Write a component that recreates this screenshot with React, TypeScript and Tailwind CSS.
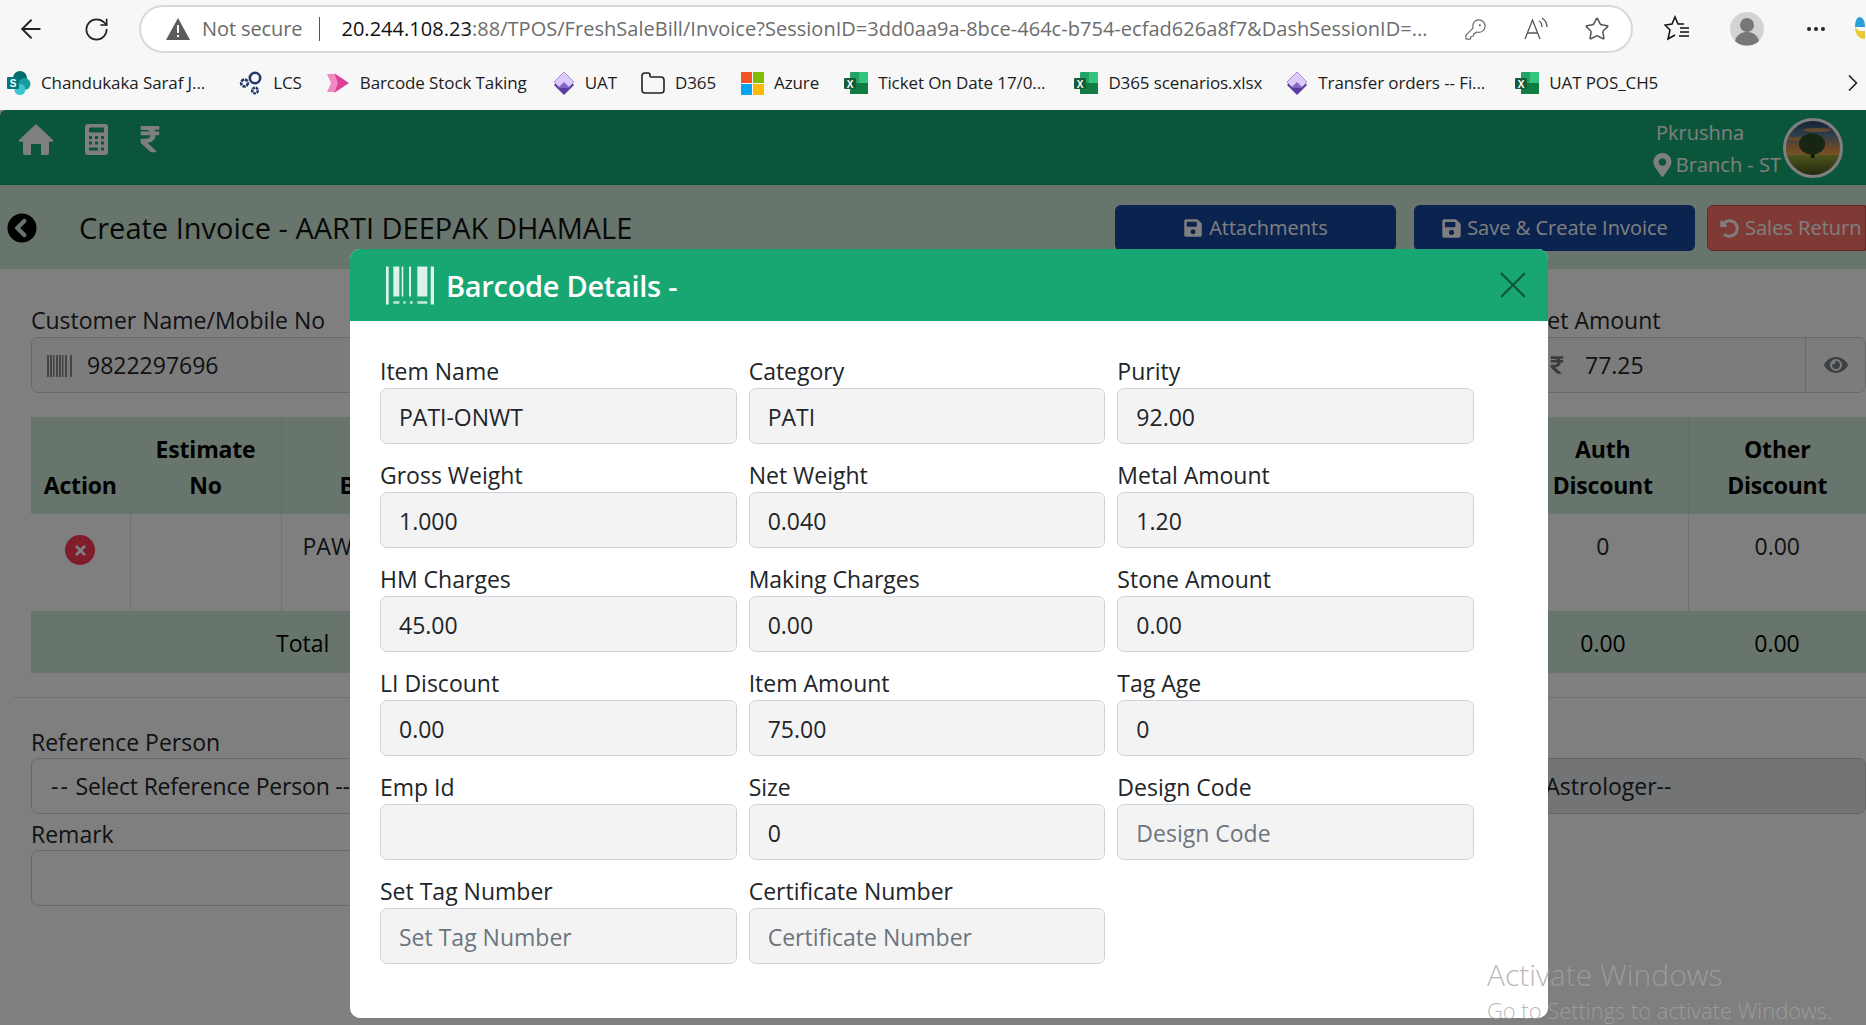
import { ArrowLeft, RotateCw, Star, KeyRound, MoreHorizontal, ChevronRight } from "lucide-react";
import { FaRupeeSign, FaSave, FaUndoAlt, FaEye, FaMapMarkerAlt, FaChevronCircleLeft, FaTimes } from "react-icons/fa";

const fields = [
  { label: "Item Name", value: "PATI-ONWT" },
  { label: "Category", value: "PATI" },
  { label: "Purity", value: "92.00" },
  { label: "Gross Weight", value: "1.000" },
  { label: "Net Weight", value: "0.040" },
  { label: "Metal Amount", value: "1.20" },
  { label: "HM Charges", value: "45.00" },
  { label: "Making Charges", value: "0.00" },
  { label: "Stone Amount", value: "0.00" },
  { label: "LI Discount", value: "0.00" },
  { label: "Item Amount", value: "75.00" },
  { label: "Tag Age", value: "0" },
  { label: "Emp Id", value: "" },
  { label: "Size", value: "0" },
  { label: "Design Code", placeholder: "Design Code" },
  { label: "Set Tag Number", placeholder: "Set Tag Number" },
  { label: "Certificate Number", placeholder: "Certificate Number" },
];

function SharePointIcon() {
  return (
    <svg width="24" height="24" viewBox="0 0 24 24">
      <circle cx="13" cy="7" r="7" fill="#036c70" />
      <circle cx="17.5" cy="13" r="6" fill="#1a9ba1" />
      <circle cx="13" cy="18.5" r="5.5" fill="#37c6d0" />
      <rect x="0" y="6" width="12" height="12" rx="1" fill="#03787c" />
      <text x="6" y="16" textAnchor="middle" fontSize="10" fontWeight="700" fill="#fff" fontFamily="Liberation Sans">S</text>
    </svg>
  );
}

function GearsIcon() {
  return (
    <svg width="24" height="24" viewBox="0 0 24 24" fill="none" stroke="#26386a" strokeWidth="2.6">
      <circle cx="16" cy="7" r="5.2" />
      <circle cx="5.5" cy="12" r="3.4" strokeDasharray="3.2 .8" />
      <circle cx="16" cy="19.5" r="2.8" strokeDasharray="2.6 .8" />
    </svg>
  );
}

function ArrowIcon() {
  return (
    <svg width="24" height="22" viewBox="0 0 24 22">
      <path d="M1 2h7l5 9-5 9H1l4-9z" fill="#f08ac0" />
      <path d="M8 1l15 10L8 21l4-10z" fill="#dd3f97" />
    </svg>
  );
}

function DiamondIcon() {
  return (
    <svg width="22" height="24" viewBox="0 0 22 24">
      <path d="M1 14l5-5h10l5 5-10 10z" fill="#5a3a9e" />
      <path d="M11 1l10 10-5 5H6l-5-5z" fill="#dccbfa" stroke="#a98ae0" strokeWidth="1" />
      <path d="M6 16l5-5 5 5z" fill="#8565c6" />
    </svg>
  );
}

function FolderIcon() {
  return (
    <svg width="24" height="22" viewBox="0 0 24 22" fill="none" stroke="#222" strokeWidth="1.6">
      <path d="M1 18V4a3 3 0 0 1 3-3h3a2 2 0 0 1 2 2v1a1 1 0 0 0 1 1h10a3 3 0 0 1 3 3v10a3 3 0 0 1-3 3H4a3 3 0 0 1-3-3z" />
    </svg>
  );
}

function MicrosoftIcon() {
  return (
    <svg width="23" height="23" viewBox="0 0 23 23">
      <rect width="11" height="11" fill="#f35325" />
      <rect x="12" width="11" height="11" fill="#81bc06" />
      <rect y="12" width="11" height="11" fill="#05a6f0" />
      <rect x="12" y="12" width="11" height="11" fill="#ffba08" />
    </svg>
  );
}

function ExcelIcon() {
  return (
    <svg width="24" height="22" viewBox="0 0 24 22">
      <rect x="6" y="0" width="18" height="22" rx="1" fill="#21a366" />
      <rect x="15" y="0" width="9" height="11" fill="#33c481" />
      <rect x="6" y="11" width="18" height="11" fill="#107c41" />
      <rect x="0" y="6" width="12" height="11" rx="1" fill="#185c37" />
      <text x="6" y="15.5" textAnchor="middle" fontSize="10" fontWeight="700" fill="#fff" fontFamily="Liberation Sans">X</text>
    </svg>
  );
}

function Bookmark({ icon, text, className = "" }: { icon: React.ReactNode; text: string; className?: string }) {
  return (
    <div className={`flex items-center gap-[10px] shrink-0 ${className}`}>
      {icon}
      <span className="text-[17px] tracking-[-0.1px] text-[#1c1c1c] whitespace-nowrap">{text}</span>
    </div>
  );
}

function BarsIcon({ className }: { className: string }) {
  return (
    <svg viewBox="0 0 25 22" className={className} fill="currentColor">
      <rect x="0" width="2" height="22" />
      <rect x="3" width="2" height="22" />
      <rect x="6" width="1.5" height="22" />
      <rect x="9" width="2" height="22" />
      <rect x="12" width="2" height="22" />
      <rect x="15" width="1.5" height="22" />
      <rect x="18" width="2" height="22" />
      <rect x="23" width="2" height="22" />
    </svg>
  );
}

function Avatar() {
  return (
    <svg width="60" height="60" viewBox="0 0 60 60" className="absolute right-[23px] top-[8px]">
      <defs>
        <clipPath id="avatar"><circle cx="30" cy="30" r="28" /></clipPath>
        <linearGradient id="sky" x1="0" y1="0" x2="0" y2="1">
          <stop offset="0" stopColor="#17385c" />
          <stop offset="0.45" stopColor="#5f7f9c" />
          <stop offset="0.8" stopColor="#d89048" />
          <stop offset="1" stopColor="#f0a850" />
        </linearGradient>
        <linearGradient id="field" x1="0" y1="0" x2="0" y2="1">
          <stop offset="0" stopColor="#9aa83a" />
          <stop offset="1" stopColor="#3c4a1a" />
        </linearGradient>
      </defs>
      <g clipPath="url(#avatar)">
        <rect width="60" height="38" fill="url(#sky)" />
        <ellipse cx="34" cy="12" rx="14" ry="2" fill="#c9925c" />
        <ellipse cx="14" cy="21" rx="10" ry="2" fill="#c9925c" />
        <rect y="37" width="60" height="23" fill="url(#field)" />
        <path d="M28 40h3.5l-.5-14h-2.5z" fill="#1c1c10" />
        <ellipse cx="29" cy="26" rx="13" ry="10.5" fill="#2d4c24" />
      </g>
      <circle cx="30" cy="30" r="28.5" fill="none" stroke="#fff" strokeWidth="3" />
    </svg>
  );
}

export default function App() {
  return (
    <div className="w-[1866px] h-[1025px] relative overflow-hidden flex flex-col bg-white font-['Open_Sans','Liberation_Sans',sans-serif]">
      {/* Browser toolbar */}
      <div className="h-[58px] bg-[#f7f7f7] flex items-center shrink-0">
        <ArrowLeft size={30} strokeWidth={1.5} className="ml-[16px] text-[#222]" />
        <RotateCw size={27} strokeWidth={1.5} className="ml-[37px] text-[#222]" />
        <div className="ml-[29px] w-[1494px] h-[48px] rounded-full bg-white border-2 border-[#d9d9d9] flex items-center">
          <svg width="24" height="22" viewBox="0 0 24 22" className="ml-[25px]">
            <path d="M12 0L24 22H0z" fill="#5c5c5c" />
            <rect x="11" y="7" width="2" height="8" fill="#fff" />
            <rect x="11" y="17" width="2" height="2" fill="#fff" />
          </svg>
          <span className="ml-[12px] text-[20px] tracking-[-0.1px] text-[#6a6a6a] whitespace-nowrap">Not secure</span>
          <div className="ml-[17px] w-px h-[24px] bg-[#555]" />
          <span className="ml-[21px] text-[20px] tracking-[0.03px] text-[#6d6d6d] whitespace-nowrap">
            <span className="text-[#111]">20.244.108.23</span>:88/TPOS/FreshSaleBill/Invoice?SessionID=3dd0aa9a-8bce-464c-b754-ecfad626a8f7&amp;DashSessionID=...
          </span>
          <div className="flex-1" />
          <KeyRound size={23} strokeWidth={1.2} className="text-[#666]" />
          <svg width="26" height="26" viewBox="0 0 26 26" fill="none" stroke="#555" strokeWidth="1.3" className="ml-[37px]">
            <path d="M1 23L8.500 4 16 23M3.500 17h10" />
            <path d="M15 5c2 1 3 3 3 6M18 2c3 2 5 5 5 9" />
          </svg>
          <Star size={26} strokeWidth={1.4} className="ml-[34px] mr-[21px] text-[#555]" />
        </div>
        <svg width="26" height="28" viewBox="0 0 26 28" fill="none" stroke="#111" strokeWidth="1.5" className="ml-[31px]">
          <path d="M20 9h-6l-3-7-3 7-7 1 5 5-2 9 7-4" />
          <path d="M16 13h9M16 17h9M15 21h10" />
        </svg>
        <svg width="34" height="34" viewBox="0 0 34 34" className="ml-[40px]">
          <circle cx="17" cy="17" r="17" fill="#d3d3d3" />
          <circle cx="17" cy="13" r="7" fill="#777" />
          <path d="M5 29c2-7 7-9 12-9s10 2 12 9c-6 6-18 6-24 0z" fill="#777" />
        </svg>
        <MoreHorizontal size={24} className="ml-[40px] text-[#222]" />
        <svg width="14" height="28" viewBox="0 0 14 28" className="ml-[23px]">
          <path d="M8 2c4 0 6 4 6 10H4c0-4 1-9 4-10z" fill="#2b9fd8" />
          <path d="M4 12c0 6 3 12 10 12v-8H8z" fill="#e9c92f" />
        </svg>
      </div>

      {/* Bookmarks */}
      <div className="h-[52px] bg-[#f7f7f7] flex items-center pl-[7px] pb-[2px] shrink-0 relative">
        <Bookmark icon={<SharePointIcon />} text="Chandukaka Saraf J..." />
        <Bookmark icon={<GearsIcon />} text="LCS" className="ml-[34px]" />
        <Bookmark icon={<ArrowIcon />} text="Barcode Stock Taking" className="ml-[24px]" />
        <Bookmark icon={<DiamondIcon />} text="UAT" className="ml-[26px]" />
        <Bookmark icon={<FolderIcon />} text="D365" className="ml-[24px]" />
        <Bookmark icon={<MicrosoftIcon />} text="Azure" className="ml-[25px]" />
        <Bookmark icon={<ExcelIcon />} text="Ticket On Date 17/0..." className="ml-[25px]" />
        <Bookmark icon={<ExcelIcon />} text="D365 scenarios.xlsx" className="ml-[29px]" />
        <Bookmark icon={<DiamondIcon />} text="Transfer orders -- Fi..." className="ml-[24px]" />
        <Bookmark icon={<ExcelIcon />} text="UAT POS_CH5" className="ml-[30px]" />
        <ChevronRight size={28} strokeWidth={1.5} className="absolute right-[-1px] top-[11px] text-[#222]" />
      </div>

      {/* Page behind the dialog */}
      <div className="flex-1 relative overflow-hidden text-[#212529] text-[23px]">
        <div className="h-[75px] bg-[#16ac76] rounded-tl-[6px] flex items-start text-white relative">
          <svg width="34" height="31" viewBox="0 0 34 31" fill="currentColor" className="ml-[19px] mt-[14px]">
            <path d="M17 0l17 16c.6.8 0 1.800-1 1.800h-3V29a2 2 0 0 1-2 2h-6V20h-10v11H6a2 2 0 0 1-2-2V17.800H1c-1 0-1.600-1-1-1.800z" />
          </svg>
          <svg width="23" height="31" viewBox="0 0 23 31" className="ml-[32px] mt-[14px]">
            <rect width="23" height="31" rx="3" fill="#fff" />
            <rect x="4" y="3.500" width="15" height="5" rx="1" fill="#16ac76" />
            <rect x="4" y="12" width="3" height="3" fill="#16ac76" />
            <rect x="10" y="12" width="3" height="3" fill="#16ac76" />
            <rect x="16" y="12" width="3" height="3" fill="#16ac76" />
            <rect x="4" y="17.500" width="3" height="3" fill="#16ac76" />
            <rect x="10" y="17.500" width="3" height="3" fill="#16ac76" />
            <rect x="16" y="17.500" width="3" height="3" fill="#16ac76" />
            <rect x="4" y="23.500" width="9" height="3" fill="#16ac76" />
            <rect x="16" y="23.500" width="3" height="3" fill="#16ac76" />
          </svg>
          <FaRupeeSign size={30} className="ml-[27px] mt-[14px]" />
          <div className="ml-auto mr-[85px] pt-[7px] w-[125px] text-[20px] leading-[32px] whitespace-nowrap">
            <div>Pkrushna</div>
            <div className="flex items-center gap-[4px]">
              <FaMapMarkerAlt size={24} className="-ml-[3px]" />
              <span>Branch - ST</span>
            </div>
          </div>
          <Avatar />
        </div>

        <div className="h-[84px] bg-[#d1ebdb] flex items-start">
          <FaChevronCircleLeft size={30} className="ml-[7px] mt-[28px] text-black" />
          <div className="ml-[42px] mt-[21px] text-[29px] text-[#111]">Create Invoice - AARTI DEEPAK DHAMALE</div>
          <div className="ml-auto mt-[20px] flex items-start">
            <div className="w-[281px] h-[46px] rounded-[6px] bg-[#14469f] text-white flex items-center justify-center gap-[6px] text-[20px]"><FaSave size={20} />Attachments</div>
            <div className="ml-[18px] w-[281px] h-[46px] rounded-[6px] bg-[#14469f] text-white flex items-center justify-center gap-[5px] text-[20px]"><FaSave size={21} />Save &amp; Create Invoice</div>
            <div className="ml-[12px] w-[159px] h-[46px] rounded-l-[6px] bg-[#ff746a] border border-[#d9534f] text-white flex items-center pl-[12px] gap-[6px] text-[20px] whitespace-nowrap"><FaUndoAlt size={19} />Sales Return</div>
          </div>
        </div>

        <div className="flex justify-between pl-[31px] pt-[34px]">
          <div className="w-[700px]">
            <div className="h-[34px]">Customer Name/Mobile No</div>
            <div className="h-[56px] rounded-[7px] border border-[#ced4da] bg-[#f9f9f9] flex items-center pl-[15px] pt-[1px]">
              <BarsIcon className="w-[25px] h-[22px] text-[#888]" />
              <span className="ml-[15px]">9822297696</span>
            </div>
          </div>
          <div className="w-[336px]">
            <div className="h-[34px]">Net Amount</div>
            <div className="h-[56px] rounded-[7px] border border-[#ced4da] bg-[#f9f9f9] flex items-center">
              <FaRupeeSign size={20} className="ml-[16px] text-[#777]" />
              <span className="ml-[18px]">77.25</span>
              <div className="ml-auto w-[60px] h-full border-l border-[#ced4da] flex items-center justify-center">
                <FaEye size={24} className="text-[#7b8085]" />
              </div>
            </div>
          </div>
        </div>

        <table className="table-fixed ml-[31px] w-[1835px] mt-[24px] border-collapse text-center">
          <thead>
            <tr className="h-[97px] bg-[#d1ebdb] font-bold text-black leading-[36px] tracking-[-0.2px]">
              <th className="w-[99px] align-bottom pb-[11px] border-r border-[#c4dccd]">Action</th>
              <th className="w-[151px] align-bottom pb-[11px] border-r border-[#c4dccd]">Estimate<br />No</th>
              <th className="align-bottom pb-[11px] text-left pl-[58px]">Barcode</th>
              <th className="w-[170px] align-bottom pb-[11px] border-r border-[#c4dccd]">Auth<br />Discount</th>
              <th className="w-[178px] align-bottom pb-[11px]">Other<br />Discount</th>
            </tr>
          </thead>
          <tbody>
            <tr className="h-[97px]">
              <td className="align-top pt-[21px] border-r border-[#dee2e6]">
                <span className="flex mx-auto w-[30px] h-[30px] rounded-full bg-[#ff3b55] items-center justify-center text-white"><FaTimes size={15} /></span>
              </td>
              <td className="border-r border-[#dee2e6]" />
              <td className="align-top pt-[15px] text-left pl-[21px]">PAW</td>
              <td className="align-top pt-[15px] border-r border-[#dee2e6]">0</td>
              <td className="align-top pt-[15px]">0.00</td>
            </tr>
            <tr className="h-[62px] bg-[#d1ebdb] text-black">
              <td colSpan={3} className="text-left pl-[245px] pt-[2px]">Total</td>
              <td className="pt-[2px]">0.00</td>
              <td className="pt-[2px]">0.00</td>
            </tr>
          </tbody>
        </table>

        <div className="ml-[13px] mt-[24px] border-t border-[#dee2e6]" />

        <div className="flex justify-between pl-[31px] pt-[27px]">
          <div className="w-[700px]">
            <div className="h-[33px]">Reference Person</div>
            <div className="h-[56px] rounded-[7px] border border-[#ced4da] flex items-center pl-[19px] pt-[1px] tracking-[-0.2px]"><span className="tracking-[2px]">--</span>&nbsp;Select Reference Person --</div>
            <div className="h-[33px] mt-[3px]">Remark</div>
            <div className="h-[56px] rounded-[7px] border border-[#ced4da]" />
          </div>
          <div className="w-[446px]">
            <div className="h-[33px]" />
            <div className="h-[56px] rounded-[7px] border border-[#c6c9cc] bg-[#e6e8ea] flex items-center pl-[40px] pt-[1px]">--Select Astrologer--</div>
          </div>
        </div>

        <div className="absolute inset-0 bg-black/50" />

        {/* Barcode details dialog */}
        <div className="absolute left-[350px] top-[139px] w-[1198px] h-[769px] rounded-[10px] overflow-hidden bg-white">
          <div className="h-[72px] bg-[#18a673] flex items-center text-white">
            <svg viewBox="0 0 144 114" className="ml-[36px] w-[48px] h-[39px]" fill="#fff">
              <rect x="0" width="8" height="114" opacity=".85" />
              <rect x="22" width="18" height="90" opacity=".85" />
              <rect x="47" width="5" height="90" opacity=".85" />
              <rect x="69" width="6" height="90" opacity=".85" />
              <rect x="94" width="30" height="90" opacity=".85" />
              <rect x="134" width="10" height="114" opacity=".85" />
              <rect x="22" y="104" width="18" height="8" opacity=".7" />
              <rect x="52" y="104" width="7" height="8" opacity=".7" />
              <rect x="72" y="104" width="8" height="8" opacity=".7" />
              <rect x="94" y="104" width="30" height="8" opacity=".7" />
            </svg>
            <span className="ml-[12px] mt-[1px] text-[29px] font-semibold tracking-[-0.3px]">Barcode Details -</span>
            <svg width="26" height="26" viewBox="0 0 26 26" stroke="#0b563b" strokeWidth="2.2" className="ml-auto mr-[22px]">
              <path d="M1 1l24 24M25 1L1 25" />
            </svg>
          </div>
          <div className="grid grid-cols-3 gap-x-[12px] gap-y-[15px] w-[1094px] ml-[30px] pt-[34px] text-[23px] text-[#212529]">
            {fields.map((f) => (
              <div key={f.label}>
                <div className="h-[33px] leading-[33px]">{f.label}</div>
                <div className={`h-[56px] rounded-[7px] border border-[#ced4da] bg-[#f3f3f4] flex items-center pl-[18px] pt-[3px] ${f.placeholder ? "text-[#6c757d]" : ""}`}>
                  {f.placeholder ?? f.value}
                </div>
              </div>
            ))}
          </div>
        </div>
      </div>

      {/* Windows watermark */}
      <div className="absolute left-[1487px] top-[954px] pointer-events-none font-light text-[rgba(163,163,163,0.78)] whitespace-nowrap">
        <div className="text-[30px] leading-[42px]">Activate Windows</div>
        <div className="text-[21.9px] leading-[28px] mt-[1px]">Go to Settings to activate Windows.</div>
      </div>
    </div>
  );
}
